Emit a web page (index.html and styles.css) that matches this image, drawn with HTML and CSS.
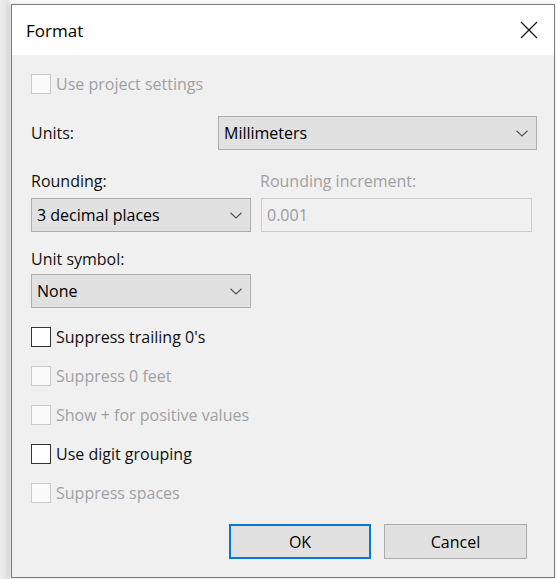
FILE: index.html
```html
<!DOCTYPE html>
<html lang="en">
<head>
<meta charset="utf-8">
<title>Format</title>
<link rel="stylesheet" href="styles.css">
</head>
<body>
<div class="desk">
  <div class="window">
    <div class="titlebar">
      <span class="title">Format</span>
      <span class="close">
        <svg width="18" height="18" viewBox="0 0 18 18"><path d="M1 1 L17 17 M17 1 L1 17" stroke="#1b1b1b" stroke-width="1.3" fill="none"/></svg>
      </span>
    </div>
    <div class="content">
      <label class="check disabled"><span class="box"></span><span>Use project settings</span></label>

      <div class="units-row">
        <span class="label">Units:</span>
        <div class="select units-select"><span>Millimeters</span>
          <svg class="chev" width="12" height="7" viewBox="0 0 12 7"><path d="M0.5 0.8 L6 6 L11.5 0.8" stroke="#555" stroke-width="1.2" fill="none"/></svg>
        </div>
      </div>

      <div class="rounding-row">
        <div class="field">
          <span class="label">Rounding:</span>
          <div class="select narrow"><span>3 decimal places</span>
            <svg class="chev" width="12" height="7" viewBox="0 0 12 7"><path d="M0.5 0.8 L6 6 L11.5 0.8" stroke="#555" stroke-width="1.2" fill="none"/></svg>
          </div>
        </div>
        <div class="field">
          <span class="label disabled">Rounding increment:</span>
          <div class="textbox">0.001</div>
        </div>
      </div>

      <div class="field symbol-field">
        <span class="label">Unit symbol:</span>
        <div class="select narrow"><span>None</span>
          <svg class="chev" width="12" height="7" viewBox="0 0 12 7"><path d="M0.5 0.8 L6 6 L11.5 0.8" stroke="#555" stroke-width="1.2" fill="none"/></svg>
        </div>
      </div>

      <div class="checks">
        <label class="check"><span class="box"></span><span>Suppress trailing 0's</span></label>
        <label class="check disabled"><span class="box"></span><span>Suppress 0 feet</span></label>
        <label class="check disabled"><span class="box"></span><span>Show + for positive values</span></label>
        <label class="check"><span class="box"></span><span>Use digit grouping</span></label>
        <label class="check disabled"><span class="box"></span><span>Suppress spaces</span></label>
      </div>

      <div class="buttons">
        <button class="btn default">OK</button>
        <button class="btn">Cancel</button>
      </div>
    </div>
  </div>
</div>
</body>
</html>
```
FILE: styles.css
```css
* { box-sizing: border-box; }

html, body {
  margin: 0;
  padding: 0;
  background: #fbfbfb;
}

body {
  font-family: "Open Sans", "Noto Sans", sans-serif;
  font-size: 16px;
  color: #111111;
}

.desk {
  padding: 4px 2px 1px 11px;
  background: linear-gradient(to right, #eeeeee 0, #e2e2e2 8px, #fbfbfb 11px);
}

.window {
  height: 574px;
  border: 1px solid #7c7c7c;
  background: #f0f0f0;
  display: flex;
  flex-direction: column;
  box-shadow: -2px 0 4px rgba(0, 0, 0, 0.12);
}

.titlebar {
  height: 50px;
  background: #ffffff;
  display: flex;
  align-items: center;
  justify-content: space-between;
  padding: 0 16px 0 14px;
}

.title {
  font-size: 17px;
  color: #000;
}

.close {
  display: flex;
}

.content {
  flex: 1;
  display: flex;
  flex-direction: column;
  padding: 19px 17px 0 19px;
}

.label {
  height: 20px;
  line-height: 20px;
  display: block;
}

.disabled,
.label.disabled {
  color: #a0a0a4;
}

/* checkbox rows */
.check {
  display: flex;
  align-items: center;
  height: 20px;
  gap: 5px;
}

.box {
  width: 20px;
  height: 20px;
  border: 1px solid #333333;
  background: #ffffff;
  flex: none;
}

.check.disabled .box {
  border-color: #cccccc;
  background: #fbfbfb;
}

/* drop-downs */
.select {
  height: 34px;
  border: 1px solid #adadad;
  background: #e1e1e1;
  display: flex;
  align-items: center;
  justify-content: space-between;
  padding: 0 8px 0 5px;
  color: #000;
}

.units-row {
  margin-top: 22px;
  display: flex;
  align-items: center;
}

.units-row .label {
  width: 187px;
}

.units-select {
  width: 319px;
}

.narrow {
  width: 220px;
}

.rounding-row {
  margin-top: 21px;
  display: flex;
  gap: 9px;
}

.field {
  display: flex;
  flex-direction: column;
  gap: 7px;
}

.textbox {
  width: 271px;
  height: 34px;
  border: 1px solid #cccccc;
  background: #f0f0f0;
  color: #9a9aa0;
  display: flex;
  align-items: center;
  padding: 0 5px;
  margin-left: 1px;
}

.symbol-field {
  margin-top: 17px;
  gap: 5px;
}

.checks {
  margin-top: 19px;
  display: flex;
  flex-direction: column;
  gap: 19px;
}

.buttons {
  margin-top: 21px;
  display: flex;
  gap: 13px;
  padding-left: 198px;
}

.btn {
  width: 143px;
  height: 35px;
  border: 1px solid #adadad;
  background: #e1e1e1;
  font: inherit;
  color: #000;
  padding: 0;
}

.btn.default {
  width: 142px;
  border: 2px solid #0078d7;
}
```
